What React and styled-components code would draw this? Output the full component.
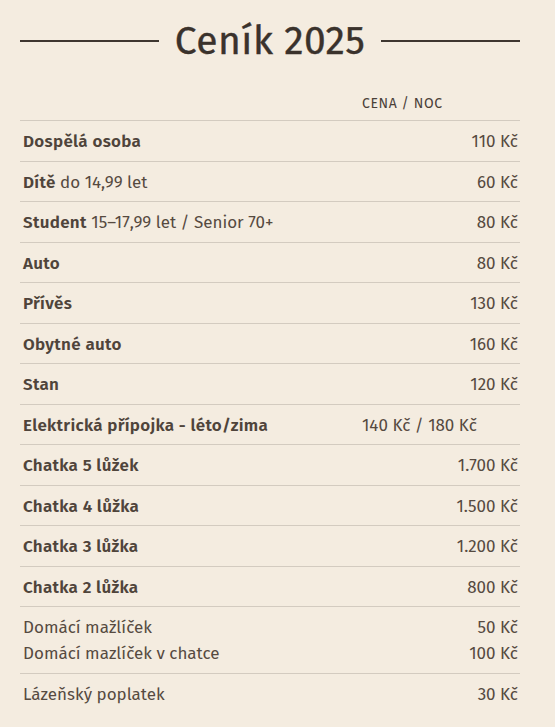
import React from 'react'
import styled, { createGlobalStyle } from 'styled-components'

const GlobalStyle = createGlobalStyle`
  html, body {
    margin: 0;
    padding: 0;
    background: #f4ece0;
  }
  body {
    font-family: "Fira Sans", "Open Sans", "Noto Sans", sans-serif;
    color: #4a4038;
  }
`

const rows = [
  { name: 'Dospělá osoba', price: '110 Kč' },
  { name: 'Dítě', note: 'do 14,99 let', price: '60 Kč' },
  { name: 'Student', note: '15–17,99 let / Senior 70+', price: '80 Kč' },
  { name: 'Auto', price: '80 Kč' },
  { name: 'Přívěs', price: '130 Kč' },
  { name: 'Obytné auto', price: '160 Kč' },
  { name: 'Stan', price: '120 Kč' },
  { name: 'Elektrická přípojka - léto/zima', price: '140 Kč / 180 Kč', left: true },
  { name: 'Chatka 5 lůžek', price: '1.700 Kč' },
  { name: 'Chatka 4 lůžka', price: '1.500 Kč' },
  { name: 'Chatka 3 lůžka', price: '1.200 Kč' },
  { name: 'Chatka 2 lůžka', price: '800 Kč' },
]

function App() {
  return (
    <>
      <GlobalStyle />
      <Page>
        <TitleRow>
          <Rule />
          <Title>Ceník 2025</Title>
          <Rule />
        </TitleRow>

        <Table>
          <colgroup>
            <col style={{ width: 339 }} />
            <col />
          </colgroup>
          <thead>
            <tr>
              <HeadCell />
              <HeadCell>Cena / noc</HeadCell>
            </tr>
          </thead>
          <tbody>
            {rows.map((r, idx) => (
              <Row key={idx}>
                <Label>
                  <b>{r.name}</b>
                  {r.note && <> {r.note}</>}
                </Label>
                <Price left={r.left}>{r.price}</Price>
              </Row>
            ))}
            <Row>
              <Label tight>
                Domácí mažlíček<br />
                Domácí mazlíček v chatce
              </Label>
              <Price tight>
                50 Kč<br />
                100 Kč
              </Price>
            </Row>
            <Row last>
              <Label>Lázeňský poplatek</Label>
              <Price>30 Kč</Price>
            </Row>
          </tbody>
        </Table>
      </Page>
    </>
  )
}

const Page = styled.div`
  width: 500px;
  margin-left: 20px;
  padding-top: 18px;
`

const TitleRow = styled.div`
  display: flex;
  align-items: center;
  gap: 16px;
  height: 46px;
`

const Rule = styled.div`
  flex: 1;
  height: 2px;
  background: #3e3630;
`

const Title = styled.h1`
  margin: 0;
  font-size: 39px;
  font-weight: 400;
  line-height: 46px;
  color: #3a322c;
  letter-spacing: 0.4px;
  -webkit-text-stroke: 0.4px #3a322c;
`

const Table = styled.table`
  width: 100%;
  border-collapse: collapse;
  margin-top: 27px;
  font-size: 17px;
`

const HeadCell = styled.th`
  text-align: left;
  font-weight: 400;
  font-size: 14px;
  text-transform: uppercase;
  letter-spacing: 0.6px;
  color: #4a4038;
  padding: 3px 3px 6px;
  line-height: 20px;
  border-bottom: 1px solid #d3cbc0;
`

const Row = styled.tr`
  border-bottom: ${(props) => (props.last ? 'none' : '1px solid #d3cbc0')};
`

const Label = styled.td`
  padding: ${(props) => (props.tight ? '8px 3px 6px' : '9px 3px 7px')};
  line-height: ${(props) => (props.tight ? '26px' : '23.5px')};
  color: #564a40;

  b {
    font-weight: 600;
    letter-spacing: 0.3px;
    color: #4f443b;
  }
`

const Price = styled.td`
  padding: ${(props) => (props.tight ? '8px 2px 6px 3px' : '9px 2px 7px 3px')};
  line-height: ${(props) => (props.tight ? '26px' : '23.5px')};
  text-align: ${(props) => (props.left ? 'left' : 'right')};
  color: #564a40;
  white-space: nowrap;
`

export default App
